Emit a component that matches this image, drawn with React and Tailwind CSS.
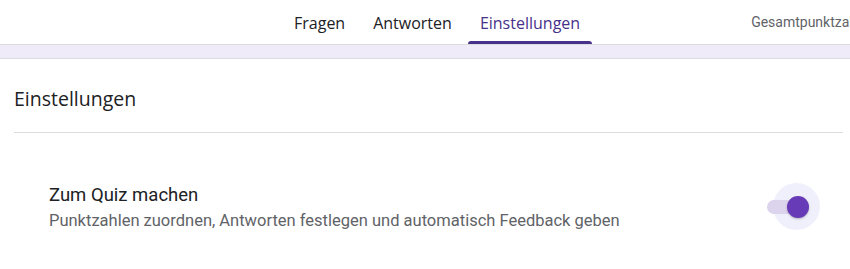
import { useState } from "react";

const tabs = ["Fragen", "Antworten", "Einstellungen"];

function Toggle({ checked, onChange }) {
  return (
    <button
      className="relative w-[56px] h-[48px] flex items-center"
      onClick={() => onChange(!checked)}>
      {/* halo behind the thumb */}
      <span className="absolute left-[9px] top-[0px] w-[47px] h-[47px] rounded-full bg-[#eff0fc]" />
      <span className="relative ml-[3px] w-[34px] h-[14px] rounded-full bg-[#dcd3ec]" />
      <span className="relative -ml-[14px] w-[22px] h-[22px] rounded-full bg-[#673ab7] shadow-[0_1px_2px_rgba(0,0,0,0.25)]" />
    </button>
  );
}

function App() {
  const [activeTab, setActiveTab] = useState("Einstellungen");
  const [quiz, setQuiz] = useState(true);

  return (
    <div className="w-[850px] h-[269px] bg-white overflow-hidden font-['Open_Sans',sans-serif]">
      {/* header with tabs */}
      <div className="h-[44px] flex items-stretch pl-[282px] whitespace-nowrap">
        <div className="w-[312px] flex gap-[4px]">
          {tabs.map((tab) => (
            <button
              key={tab}
              onClick={() => setActiveTab(tab)}
              className={
                tab === activeTab
                  ? "relative px-3 text-[16px] font-medium text-[#47318a]"
                  : "relative px-3 text-[16px] font-medium text-[#202124]"
              }>
              <span className="relative top-[1px]">{tab}</span>
              {tab === activeTab && (
                <span className="absolute left-0 right-0 bottom-0 h-[3px] rounded-t-[3px] bg-[#47318a]" />
              )}
            </button>
          ))}
        </div>
        <div className="ml-[159px] flex items-center text-[14px] text-[#5f6368] font-['Roboto',sans-serif] pt-[1px]">
          Gesamtpunktzahl: 0
        </div>
      </div>

      {/* lavender band */}
      <div className="h-[15px] border-y border-[#dadce0] bg-[#efebf8]" />

      {/* settings card */}
      <div className="pl-[14px] pr-[7px]">
        <div className="h-[74px] flex items-center pt-[6px] border-b border-[#dadce0]">
          <h2 className="text-[19.5px] text-[#202124]">Einstellungen</h2>
        </div>
        <div className="flex items-center justify-between pl-[35px] pr-[23px] pt-[50px]">
          <div className="font-['Roboto',sans-serif]">
            <p className="text-[18.5px] text-[#202124] leading-[24px]">Zum Quiz machen</p>
            <p className="text-[16.5px] text-[#5f6368] leading-[20px] mt-[4px]">
              Punktzahlen zuordnen, Antworten festlegen und automatisch Feedback geben
            </p>
          </div>
          <Toggle checked={quiz} onChange={setQuiz} />
        </div>
      </div>
    </div>
  );
}

export default App;
